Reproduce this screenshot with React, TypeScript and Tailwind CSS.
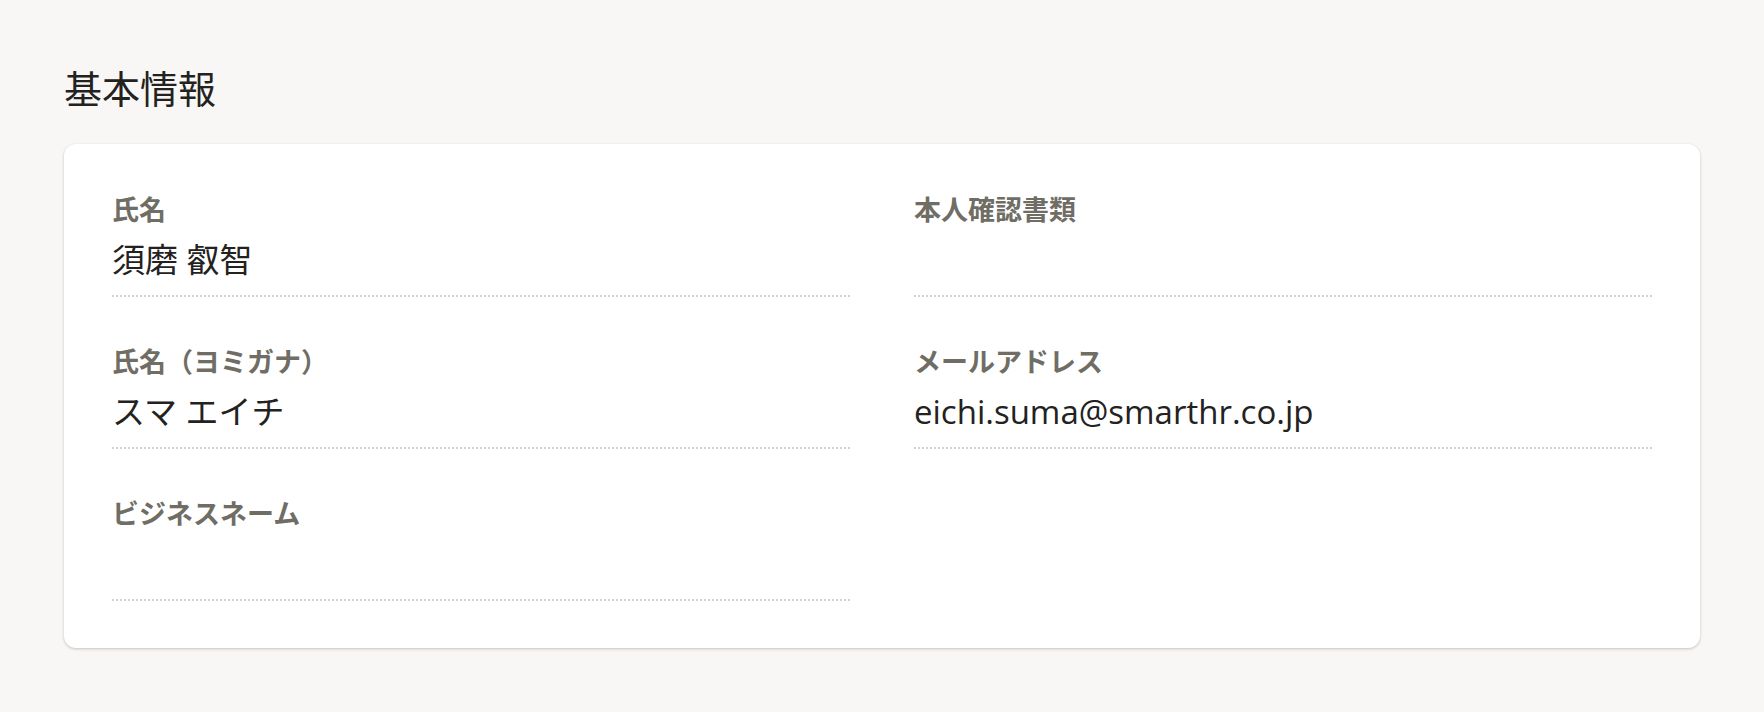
import React from "react";

type Field = { label: string; value?: string };

const fields: Field[] = [
  { label: "氏名", value: "須磨 叡智" },
  { label: "本人確認書類" },
  { label: "氏名（ヨミガナ）", value: "スマ エイチ" },
  { label: "メールアドレス", value: "eichi.suma@smarthr.co.jp" },
  { label: "ビジネスネーム" },
];

const FieldItem = ({ label, value }: Field) => {
  return (
    <div className="border-b-2 border-dotted border-[#d3d1cd] pb-[11px]">
      <div className="text-[27px] leading-[36px] font-bold text-[#706d65] [font-family:'Noto_Sans_CJK_JP',sans-serif]">
        {label}
      </div>
      <div className="mt-[9px] h-[48px] text-[33px] leading-[48px] text-[#23221e] [font-family:'Open_Sans','Noto_Sans_CJK_JP',sans-serif]">
        {value}
      </div>
    </div>
  );
};

const App = () => {
  return (
    <div className="min-h-[712px] w-full bg-[#f8f7f6] px-16 pt-[63px] pb-16">
      <h1 className="text-[38px] leading-[48px] font-normal text-[#23221f] [font-family:'Noto_Sans_CJK_JP',sans-serif]">
        基本情報
      </h1>
      <div className="mt-[33px] rounded-[12px] bg-white px-12 pt-[47px] pb-[47px] shadow-[0_1px_3px_rgba(0,0,0,0.22)]">
        <div className="grid grid-cols-2 gap-x-16 gap-y-[46px]">
          {fields.map((f) => (
            <FieldItem key={f.label} label={f.label} value={f.value} />
          ))}
        </div>
      </div>
    </div>
  );
};

export default App;
